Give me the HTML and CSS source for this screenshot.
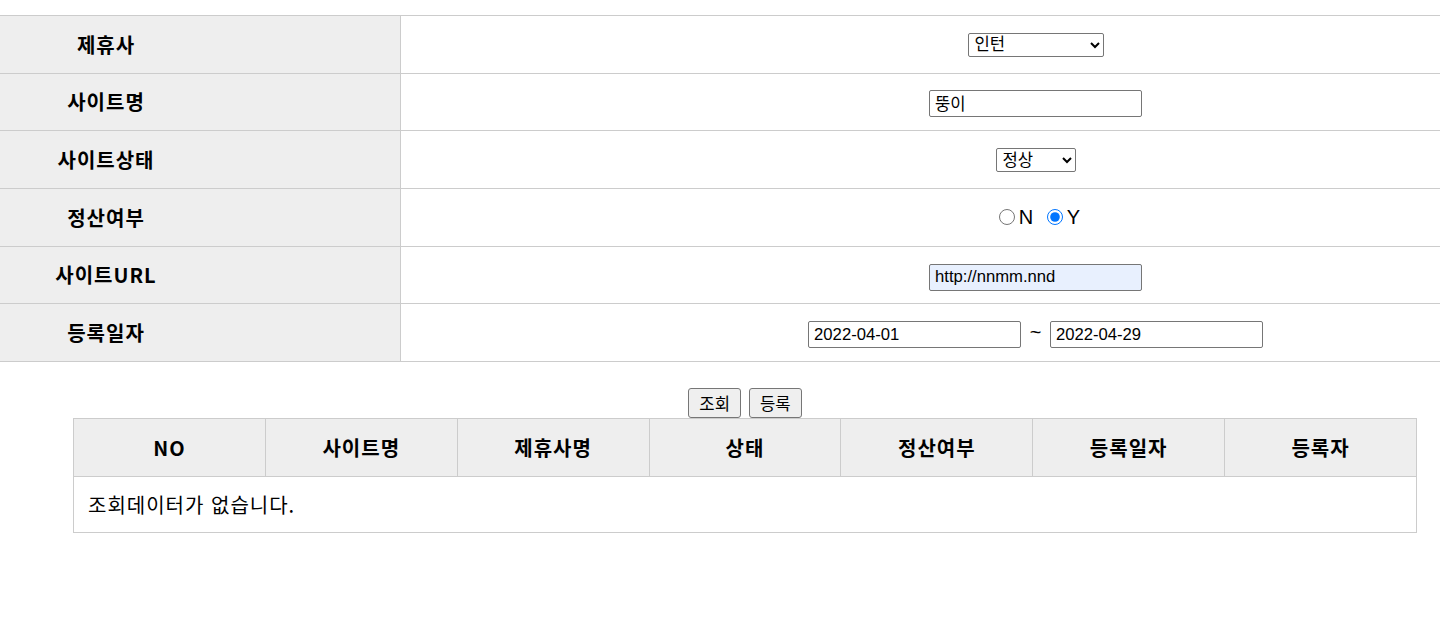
FILE: index.html
```html
<!DOCTYPE html>
<html lang="ko">
<head>
	<meta charset="utf-8">
	<title>사이트 관리</title>
	<link rel="stylesheet" href="styles.css">
</head>
<body>
	<main class="page">
		<table class="form-table">
			<tbody>
				<tr>
					<th>제휴사</th>
					<td>
						<select class="sel sel-partner">
							<option>인턴</option>
						</select>
					</td>
				</tr>
				<tr>
					<th>사이트명</th>
					<td><input type="text" class="txt" value="뚱이"></td>
				</tr>
				<tr>
					<th>사이트상태</th>
					<td>
						<select class="sel sel-state">
							<option>정상</option>
						</select>
					</td>
				</tr>
				<tr>
					<th>정산여부</th>
					<td>
						<input type="radio" class="radio" name="calc" value="N">N <input type="radio" class="radio" name="calc" value="Y" checked>Y
					</td>
				</tr>
				<tr>
					<th>사이트URL</th>
					<td><input type="text" class="txt txt-filled" value="http://nnmm.nnd"></td>
				</tr>
				<tr>
					<th>등록일자</th>
					<td>
						<input type="text" class="txt" value="2022-04-01">
						<span class="tilde">~</span>
						<input type="text" class="txt" value="2022-04-29">
					</td>
				</tr>
			</tbody>
		</table>

		<section class="result">
			<div class="btn-row">
				<button class="btn">조회</button>
				<button class="btn">등록</button>
			</div>
			<table class="list-table">
				<thead>
					<tr>
						<th>NO</th>
						<th>사이트명</th>
						<th>제휴사명</th>
						<th>상태</th>
						<th>정산여부</th>
						<th>등록일자</th>
						<th>등록자</th>
					</tr>
				</thead>
				<tbody>
					<tr>
						<td colspan="7" class="empty">조회데이터가 없습니다.</td>
					</tr>
				</tbody>
			</table>
		</section>
	</main>
</body>
</html>
```

FILE: styles.css
```css
body {
	margin: 0;
	font-family: "Liberation Sans", "Noto Sans CJK KR", sans-serif;
	color: #000;
	background: #fff;
}

.page {
	padding-top: 15px;
}

/* search form */
.form-table {
	width: 100%;
	border-collapse: collapse;
	border-top: 1px solid #ccc;
}

.form-table tr {
	border-bottom: 1px solid #ccc;
}

.form-table th {
	width: 212px;
	height: 56.67px;
	padding: 0 188px 0 0;
	background-color: #eee;
	border-right: 1px solid #ccc;
	font-family: "Noto Sans CJK KR", sans-serif;
	font-size: 20px;
	font-weight: bold;
	letter-spacing: 1px;
	text-align: center;
}

.form-table td {
	padding: 0 0 0 230px;
	text-align: center;
	font-size: 20px;
}

.txt {
	box-sizing: border-box;
	width: 213px;
	height: 27px;
	padding: 0 5px;
	border: 1px solid #767676;
	border-radius: 2px;
	font-family: "Liberation Sans", "Noto Sans CJK KR", sans-serif;
	font-size: 16.67px;
	vertical-align: -5px;
}

.txt-filled {
	background-color: #e8f0fe;
}

.sel {
	box-sizing: border-box;
	height: 24px;
	padding: 0 2px;
	border: 1px solid #767676;
	border-radius: 2px;
	background: #fff;
	font-family: "Liberation Sans", "Noto Sans CJK KR", sans-serif;
	font-size: 16.67px;
	vertical-align: middle;
}

.sel-partner {
	width: 136px;
}

.sel-state {
	width: 80px;
}

.radio {
	width: 16px;
	height: 16px;
	margin: 0 4px 0 8px;
	vertical-align: -1px;
}

.tilde {
	margin: 0 3px;
	vertical-align: -4px;
}

/* result list */
.result {
	margin: 26px 23px 0 73px;
}

.btn-row {
	display: flex;
	justify-content: center;
	gap: 8px;
}

.btn {
	height: 30px;
	padding: 0 10px;
	border: 1px solid #767676;
	border-radius: 3px;
	background-color: #efefef;
	font-family: "Noto Sans CJK KR", sans-serif;
	font-size: 16.67px;
}

.list-table {
	width: 100%;
	table-layout: fixed;
	border-collapse: collapse;
	border: 1px solid #ccc;
}

.list-table th {
	height: 57px;
	padding: 0;
	background-color: #eee;
	border: 1px solid #ccc;
	font-family: "Noto Sans CJK KR", sans-serif;
	font-size: 20px;
	font-weight: bold;
	letter-spacing: 1px;
}

.list-table td {
	height: 55px;
	padding: 0 14px;
	font-family: "Noto Sans CJK KR", sans-serif;
	font-size: 20px;
	letter-spacing: 1px;
}
```
